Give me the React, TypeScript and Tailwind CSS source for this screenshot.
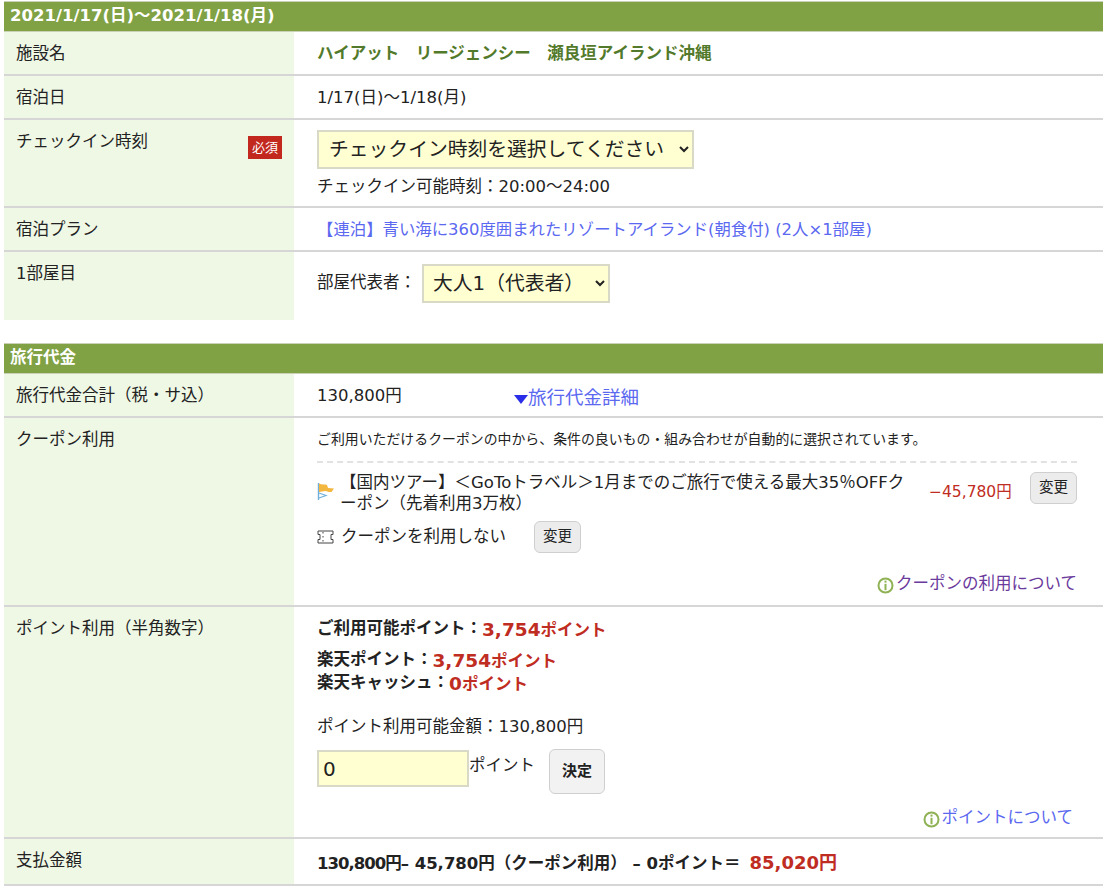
const font = "font-['DejaVu_Sans','Noto_Sans_CJK_JP',sans-serif]"

function InfoIcon() {
  return (
    <svg width="17" height="17" viewBox="0 0 17 17" className="mt-[2px] shrink-0">
      <circle cx="8.5" cy="8.5" r="7" fill="#fff" stroke="#8fb255" strokeWidth="2" />
      <rect x="7.5" y="3.6" width="2" height="2" fill="#8fb255" />
      <rect x="7.5" y="6.8" width="2" height="6.4" fill="#8fb255" />
    </svg>
  )
}

function FlagIcon() {
  return (
    <svg width="18" height="20" viewBox="0 0 18 20">
      <path d="M1.500 1v17" stroke="#6fb0dc" strokeWidth="1.400" fill="none" />
      <path d="M2 1.500c3 1.500 6 .5 8 1.500l1 3 6 .5-2.500 3.500c-3 .5-4.500-1-6-1l-6.500 1z" fill="#f3b740" />
      <path d="M2 11l7 2.500-7 2.500" stroke="#6fb0dc" strokeWidth="1.200" fill="none" />
    </svg>
  )
}

function TicketIcon() {
  return (
    <svg width="17" height="14" viewBox="0 0 17 14" fill="none" stroke="#444" strokeWidth="1">
      <path d="M1 1h15v3.500h-2v5h2V13H1V9.500h2v-5H1z" />
      <path d="M6 2v2M6 6v2M6 10v2" strokeDasharray="1.500 1" />
    </svg>
  )
}

function SectionBar({ children }: { children: React.ReactNode }) {
  return (
    <div className="flex h-[31px] items-center border-y border-[#c9d2b6] bg-[#80a244] pl-[6px] text-[16.500px] leading-none font-bold text-white">
      {children}
    </div>
  )
}

function Row({
  label,
  height,
  badge,
  noBorder,
  children,
}: {
  label: string
  height: string
  badge?: boolean
  noBorder?: boolean
  children: React.ReactNode
}) {
  return (
    <div className={`flex ${height} ${noBorder ? "" : "border-b-2 border-[#d6d6d6]"}`}>
      <div className="flex w-[290px] shrink-0 items-start justify-between bg-[#eff7e5] pt-[10px] pr-[12px] pl-[12px] leading-[24px]">
        <span>{label}</span>
        {badge && (
          <span className="mt-[6px] flex h-[23px] w-[34px] items-center justify-center bg-[#c2281d] text-[13px] leading-none text-white">
            必須
          </span>
        )}
      </div>
      <div className="min-w-0 flex-1 pl-[23px]">{children}</div>
    </div>
  )
}

function GrayButton({ className, children }: { className: string; children: React.ReactNode }) {
  return (
    <button className={`flex items-center justify-center rounded-[6px] border border-[#cfcfcf] bg-[#ececec] text-[14.500px] text-[#222] ${className}`}>
      {children}
    </button>
  )
}

function Red({ value }: { value: string }) {
  return (
    <span className="mt-[1px] -mb-[1px] text-[#bf2c22]">
      <span className="text-[18.500px]">{value}</span>ポイント
    </span>
  )
}

export default function App() {
  return (
    <div className={`h-[888px] w-[1104px] overflow-hidden bg-white pt-[1px] pr-[1px] pl-[4px] text-[16.500px] text-[#222] ${font}`}>
      <SectionBar>2021/1/17(日)〜2021/1/18(月)</SectionBar>
      <Row label="施設名" height="h-[44px]">
        <p className="pt-[10px] leading-[24px] font-bold text-[#537a2b]">ハイアット　リージェンシー　瀬良垣アイランド沖縄</p>
      </Row>
      <Row label="宿泊日" height="h-[44px]">
        <p className="pt-[10px] leading-[24px]">1/17(日)〜1/18(月)</p>
      </Row>
      <Row label="チェックイン時刻" height="h-[88px]" badge>
        <select className="mt-[10px] block h-[39px] w-[377px] border-2 border-[#d9d9c8] bg-[#ffffd2] pl-[6px] text-[19.800px] text-[#222]">
          <option>チェックイン時刻を選択してください</option>
        </select>
        <p className="mt-[6px] leading-[24px]">チェックイン可能時刻：20:00〜24:00</p>
      </Row>
      <Row label="宿泊プラン" height="h-[44px]">
        <p className="pt-[10px] text-[16.400px] leading-[24px] text-[#5b68f0]">【連泊】青い海に360度囲まれたリゾートアイランド(朝食付) (2人×1部屋)</p>
      </Row>
      <Row label="1部屋目" height="h-[68px]" noBorder>
        <div className="flex items-center pt-[12px]">
          <span>部屋代表者：</span>
          <select className="ml-[6px] h-[39px] w-[188px] border-2 border-[#d9d9c8] bg-[#ffffd2] pl-[5px] text-[19.800px] text-[#222]">
            <option>大人1（代表者）</option>
          </select>
        </div>
      </Row>

      <div className="h-[23px]" />
      <SectionBar>旅行代金</SectionBar>
      <Row label="旅行代金合計（税・サ込）" height="h-[44px]">
        <div className="flex pt-[10px] leading-[24px]">
          <span className="w-[197px]">130,800円</span>
          <span className="mt-[2px] flex items-center text-[18.500px] text-[#5b68f0]">
            <span className="mt-[3px] h-0 w-0 border-x-[7px] border-t-[9px] border-x-transparent border-t-[#2a2ee8]" />
            旅行代金詳細
          </span>
        </div>
      </Row>
      <Row label="クーポン利用" height="h-[189px]">
        <div className="flex h-full w-[760px] flex-col">
          <p className="pt-[11px] text-[13.900px] leading-[20px]">ご利用いただけるクーポンの中から、条件の良いもの・組み合わせが自動的に選択されています。</p>
          <div className="mt-[12px] flex border-t-2 border-dashed border-[#e2e2e2] pt-[8px]">
            <div className="mt-[11px] mr-[5px] shrink-0">
              <FlagIcon />
            </div>
            <p className="mt-[1px] w-[570px] text-[16.500px] leading-[21px]">【国内ツアー】＜GoToトラベル＞1月までのご旅行で使える最大35％OFFクーポン（先着利用3万枚）</p>
            <span className="mt-[9px] ml-[19px] text-[15.500px] leading-[24px] text-[#bf2c22]">−45,780円</span>
            <GrayButton className="mt-[1px] ml-[auto] h-[32px] w-[47px]">変更</GrayButton>
          </div>
          <div className="mt-[7px] flex items-center">
            <TicketIcon />
            <span className="ml-[7px]">クーポンを利用しない</span>
            <GrayButton className="ml-[28px] h-[32px] w-[47px]">変更</GrayButton>
          </div>
          <div className="mt-[19px] flex items-center justify-end text-[#6a3a9c]">
            <InfoIcon />
            <span className="ml-[2px]">クーポンの利用について</span>
          </div>
        </div>
      </Row>
      <Row label="ポイント利用（半角数字）" height="h-[232px]">
        <div className="flex w-[756px] flex-col">
          <p className="flex items-start pt-[10px] leading-[24px] font-bold">
            ご利用可能ポイント：<Red value="3,754" />
          </p>
          <p className="mt-[6px] flex items-start leading-[24px] font-bold">
            楽天ポイント：<Red value="3,754" />
          </p>
          <p className="-mt-[1px] flex items-start leading-[22px] font-bold">
            楽天キャッシュ：<Red value="0" />
          </p>
          <p className="mt-[20px] leading-[24px]">ポイント利用可能金額：130,800円</p>
          <div className="mt-[11px] flex items-start">
            <input
              readOnly
              value="0"
              className="h-[37px] w-[152px] border-2 border-[#d9d9c8] bg-[#ffffd2] pl-[4px] text-[20px] text-[#222]"
            />
            <span className="mt-[4px] leading-[24px]">ポイント</span>
            <GrayButton className="-mt-[1px] ml-[14px] h-[45px] w-[56px] bg-[#f2f2f2] text-[15px] font-bold">決定</GrayButton>
          </div>
          <div className="mt-[12px] flex items-center justify-end text-[#5b68f0]">
            <InfoIcon />
            <span className="ml-[1px]">ポイントについて</span>
          </div>
        </div>
      </Row>
      <Row label="支払金額" height="h-[47px]">
        <p className="flex items-baseline pt-[12px] leading-[24px] font-bold">
          <span className="tracking-[-1px]">130,800円</span>– 45,780円（クーポン利用） – 0ポイント＝
          <span className="ml-[9px] text-[18px] text-[#bf2c22]">85,020円</span>
        </p>
      </Row>
    </div>
  )
}
